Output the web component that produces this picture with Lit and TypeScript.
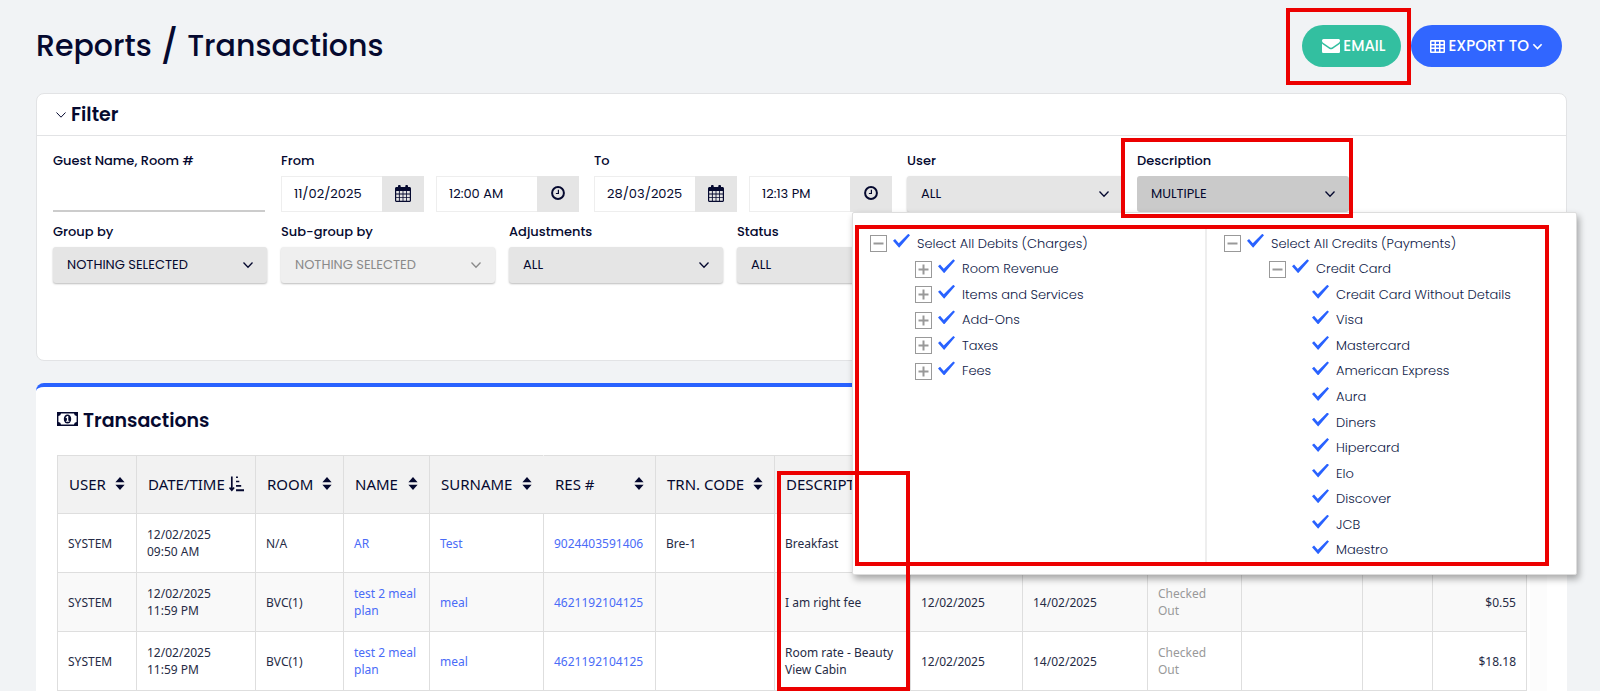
import { LitElement, html, css, svg, nothing } from "lit";
import { customElement } from "lit/decorators.js";
import { classMap } from "lit/directives/class-map.js";

interface TreeNode {
  id: string;
  label: string;
  level: number;
  toggle?: "plus" | "minus";
}

const DEBITS: TreeNode[] = [
  { id: "debits", label: "Select All Debits (Charges)", level: 0, toggle: "minus" },
  { id: "room-revenue", label: "Room Revenue", level: 1, toggle: "plus" },
  { id: "items", label: "Items and Services", level: 1, toggle: "plus" },
  { id: "addons", label: "Add-Ons", level: 1, toggle: "plus" },
  { id: "taxes", label: "Taxes", level: 1, toggle: "plus" },
  { id: "fees", label: "Fees", level: 1, toggle: "plus" },
];

const CARDS = [
  "Credit Card Without Details", "Visa", "Mastercard", "American Express", "Aura",
  "Diners", "Hipercard", "Elo", "Discover", "JCB", "Maestro",
];

const CREDITS: TreeNode[] = [
  { id: "credits", label: "Select All Credits (Payments)", level: 0, toggle: "minus" },
  { id: "credit-card", label: "Credit Card", level: 1, toggle: "minus" },
  ...CARDS.map((label, i) => ({ id: `card-${i}`, label, level: 2 })),
];

const HEADERS = ["User", "Date/Time", "Room", "Name", "Surname", "Res #", "Trn. Code", "Description", "", "", "", "", "", ""];
const WIDTHS = ["w79", "w119", "w88", "w86", "w114", "w112", "w119", "w136", "w112", "w125", "w94", "w121", "w70", "rest"];

const ROWS: string[][] = [
  ["SYSTEM", "12/02/2025 09:50 AM", "N/A", "AR", "Test", "9024403591406", "Bre-1", "Breakfast", "", "", "", "", "", ""],
  ["SYSTEM", "12/02/2025 11:59 PM", "BVC(1)", "test 2 meal plan", "meal", "4621192104125", "", "I am right fee", "12/02/2025", "14/02/2025", "Checked Out", "", "", "$0.55"],
  ["SYSTEM", "12/02/2025 11:59 PM", "BVC(1)", "test 2 meal plan", "meal", "4621192104125", "", "Room rate - Beauty View Cabin", "12/02/2025", "14/02/2025", "Checked Out", "", "", "$18.18"],
];

const chevron = (size: number, width: number) => html`<svg width=${size} height=${size} viewBox="0 0 12 12" fill="none" stroke="currentColor" stroke-width=${width} aria-hidden="true"><path d="M1.5 3.5 6 8.2l4.5-4.7"/></svg>`;

const calendarIcon = html`<svg width="16" height="17" viewBox="0 0 16 17" aria-hidden="true">
  <path fill="currentColor" fill-rule="evenodd" d="M1.5 2H3V1.2C3 .5 3.5 0 4.1 0h.5c.6 0 1.1.5 1.1 1.2V2h4.600V1.200C10.300.5 10.800 0 11.400 0h.5C12.500 0 13 .5 13 1.200V2h1.500C15.300 2 16 2.700 16 3.500v12c0 .8-.7 1.500-1.500 1.500h-13C.7 17 0 16.300 0 15.500v-12C0 2.700.7 2 1.500 2ZM1.200 6v2.500h2.700V6Zm3.600 0v2.500h2.800V6Zm3.600 0v2.500h2.800V6ZM12 6v2.500h2.800V6ZM1.200 9.400v2.500h2.700V9.400Zm3.600 0v2.500h2.800V9.400Zm3.600 0v2.500h2.800V9.400Zm3.600 0v2.500h2.800V9.400ZM1.200 12.800v3h2.700v-3Zm3.600 0v3h2.800v-3Zm3.600 0v3h2.800v-3Zm3.600 0v3h2.800v-3Z"/>
</svg>`;

const clockIcon = html`<svg width="14" height="14" viewBox="0 0 14 14" fill="none" stroke="currentColor" aria-hidden="true">
  <circle cx="7" cy="7" r="5.900" stroke-width="2"/><path stroke-width="1.200" d="M7.400 3.800v3.700H4.900"/>
</svg>`;

const mailIcon = html`<svg width="18" height="14" viewBox="0 0 18 14" aria-hidden="true">
  <path fill="currentColor" d="M1.600 0h14.800C17.300 0 18 .7 18 1.600c0 1-.7 1.900-1.500 2.500L10.700 8c-.5.400-1.100.8-1.700.8S7.800 8.400 7.300 8L1.500 4.100C.8 3.600 0 2.600 0 1.700 0 .8.7 0 1.600 0Z"/>
  <path fill="currentColor" d="M18 4.500v7.900c0 .9-.7 1.600-1.600 1.600H1.600C.7 14 0 13.300 0 12.400V4.500c.3.400.6.700 1 .9l5.500 3.800c.7.500 1.600 1.100 2.500 1.100s1.800-.6 2.500-1.100L17 5.400c.4-.2.700-.5 1-.9Z"/>
</svg>`;

const tableIcon = html`<svg width="15" height="13" viewBox="0 0 15 13" aria-hidden="true">
  <path fill="currentColor" fill-rule="evenodd" d="M1.300 0h12.400C14.400 0 15 .6 15 1.300v10.400c0 .7-.6 1.300-1.300 1.300H1.300C.6 13 0 12.400 0 11.700V1.300C0 .6.6 0 1.300 0ZM1.500 1.700v2.200h3V1.700Zm4.500 0v2.200h3V1.700Zm4.500 0v2.200h3V1.700ZM1.500 5.400v2.200h3V5.400Zm4.500 0v2.200h3V5.400Zm4.500 0v2.200h3V5.400ZM1.500 9.100v2.400h3V9.100Zm4.500 0v2.400h3V9.100Zm4.500 0v2.400h3V9.100Z"/>
</svg>`;

const moneyIcon = html`<svg width="21" height="14" viewBox="0 0 21 14" aria-hidden="true">
  <path fill="currentColor" fill-rule="evenodd" d="M0 0h21v14H0ZM4 1.400A2.800 2.800 0 0 1 1.400 4v6A2.800 2.800 0 0 1 4 12.600h13A2.800 2.800 0 0 1 19.600 10V4A2.800 2.800 0 0 1 17 1.400Z"/>
  <ellipse cx="10.500" cy="7" rx="3.700" ry="4.600" fill="currentColor"/>
  <path fill="#fff" d="M10 4h1.300v4.700h1v1H8.900v-1h1V5.700l-.9.500-.4-.8Z"/>
</svg>`;

const sortIcon = html`<svg width="10" height="13" viewBox="0 0 10 13" aria-hidden="true">
  <path fill="currentColor" d="M5 0 9.600 5.200H.4Zm0 13L.4 7.800h9.200Z"/>
</svg>`;

const sortDateIcon = html`<svg width="15" height="16" viewBox="0 0 16 16" aria-hidden="true">
  <path fill="none" stroke="currentColor" stroke-width="1.800" d="M3 0v14M.5 11.800 3 14.600l2.500-2.800"/>
  <path fill="currentColor" d="M7.500 0h2v1.700h-2Zm0 4.500H11v1.700H7.500Zm0 4.600h5.500v1.700H7.500Zm0 4.600H16v2H7.500Z"/>
</svg>`;

@customElement("app-root")
export class AppRoot extends LitElement {
  static styles = css`
    :host {
      --ink: #05092f;
      --line: #e2e3e5;
      --grey: #e5e5e5;
      display: flex;
      flex-direction: column;
      box-sizing: border-box;
      min-height: 100vh;
      padding: 25px 33px 0 36px;
      background: #f1f3f5;
      color: var(--ink);
      font: 400 13px/18px Poppins, Inter, "Open Sans", sans-serif;
    }
    * { box-sizing: border-box; }
    button, input, select { font: inherit; color: inherit; margin: 0; border: 0; border-radius: 0; }
    svg { display: block; flex: none; }
    h1, h2 { margin: 0; font-weight: 500; }

    .top { display: flex; justify-content: space-between; align-items: flex-start; height: 68px; padding-right: 5px; }
    .title { display: flex; align-items: center; gap: 9px; font-size: 30px; line-height: 42px; }
    .slash { font-size: 34px; }
    .actions { display: flex; gap: 10px; }
    .pill {
      display: flex; align-items: center; justify-content: center; gap: 3px;
      height: 42px; padding: 0 19px; border-radius: 21px;
      color: #fff; font-size: 15px; font-weight: 500; line-height: 20px;
    }
    .email { position: relative; }
    .green { background: #33bfa0; padding: 0 16px 0 20px; }
    .blue { background: #3166ff; }

    .mark { position: absolute; border: 4px solid #ec0000; pointer-events: none; z-index: 10; }
    .mark-email { inset: -17px -10px -18px -16px; }
    .mark-field { inset: -14px -4px -6px -16px; }
    .mark-tree { inset: 12px 27px 8px 2px; }
    .mark-column { top: 15px; left: 2px; width: 133px; height: 220px; }

    .filter { height: 268px; border: 1px solid var(--line); border-radius: 8px; background: #fff; }
    .filter-head { display: flex; align-items: center; gap: 4px; height: 42px; padding-left: 18px; border-bottom: 1px solid var(--line); }
    h2 { font-size: 19px; font-weight: 600; line-height: 26px; }
    .fields { display: flex; flex-wrap: wrap; gap: 10px 14px; padding: 16px 16px 0; }
    .field { width: 214px; }
    .field.range { width: 299px; }
    .field.user { width: 216px; }
    .field.desc { width: 212px; position: relative; }
    .caption { display: block; font-weight: 500; line-height: 18px; margin-bottom: 6px; }
    .row2 { padding-top: 11px; }
    .guest { display: block; width: 212px; height: 36px; background: #fff; border-bottom: 2px solid #ccc; }
    .inputs { display: flex; gap: 12px; }
    .group { display: flex; width: 143px; height: 36px; }
    .group input { width: 101px; padding: 0 12px; border: 1px solid #eee; border-right: 0; background: #fff; }
    .addon { display: flex; align-items: center; justify-content: center; width: 42px; padding: 0 0 2px; background: var(--grey); }

    .select-box { position: relative; display: block; }
    .select {
      appearance: none; display: block; width: 100%; height: 36px; padding: 0 14px;
      border-radius: 3px; background: var(--grey); box-shadow: 0 1px 2px #0004;
      text-transform: uppercase; text-align: left; opacity: 1;
    }
    .select-box svg { position: absolute; right: 13px; top: 12px; pointer-events: none; }
    .select:disabled { background: #efefef; color: #8a8a8a; }
    .muted { color: #8a8a8a; }
    .select.open { background: #cacaca; box-shadow: none; }

    .popup {
      position: absolute; z-index: 5; top: 60px; right: -228px; width: 725px;
      display: grid; grid-template-columns: 352px 1fr; padding: 15px 0 11px;
      background: #fff; border: 1px solid #ddd; border-radius: 2px; box-shadow: 2px 4px 7px #0005;
    }
    .tree {
      display: grid; grid-template-rows: repeat(13, 1fr); height: 335px; margin: 0; padding: 3px 0 0 17px;
      list-style: none; color: #0f1a48; font-weight: 300;
    }
    .tree + .tree { border-left: 2px solid #eee; }
    .node { display: flex; align-items: center; }
    .level1 { padding-left: 45px; }
    .level2 { padding-left: 88px; }
    .toggle { width: 17px; height: 17px; padding: 0; margin-right: 6px; border: 1px solid #999; background: #fff; color: #999; }
    .check {
      appearance: none; width: 17px; height: 14px; margin: 0 7px 6px 0; background: #2962ff;
      clip-path: polygon(0 50%, 12% 38%, 34% 68%, 90% 0, 100% 10%, 36% 100%);
    }

    .report {
      flex: 1; margin-top: 22px; padding: 21px 20px 0 21px;
      border-top: 4px solid #2962ff; border-radius: 8px 8px 0 0; background: #fff;
    }
    .report-head { display: flex; align-items: center; gap: 5px; margin-bottom: 21px; }
    .report-head svg { margin-bottom: 4px; }
    .scroller { padding-right: 20px; background: linear-gradient(to left, #fcfcfc 17px, #fff 17px); }
    .data { width: 100%; table-layout: fixed; border-collapse: collapse; font: 12px/17px "Segoe UI", "Noto Sans", "Open Sans", sans-serif; }
    .data th { height: 58px; padding: 0 0 2px 11px; border: 1px solid #dedede; background: #f2f2f2; text-align: left; font-size: 15px; font-weight: 400; line-height: 20px; text-transform: uppercase; }
    .data th.open-right { border-right-color: #f2f2f2; }
    .data th.marked { position: relative; }
    .data td { height: 59px; padding: 0 10px; border: 1px solid #dedede; color: #262b45; }
    .data tr:nth-child(even) td { background: #f9f9f9; }
    .data td.amount { text-align: right; }
    .data td.status { color: #999; padding-right: 30px; }
    .data td.when { padding-right: 30px; }
    .data a { color: #4a6cf7; text-decoration: none; }
    .head { display: flex; align-items: center; justify-content: space-between; gap: 3px; padding-right: 11px; white-space: nowrap; }
    .w70 { width: 70px; } .w79 { width: 79px; } .w86 { width: 86px; } .w88 { width: 88px; } .w94 { width: 94px; }
    .w112 { width: 112px; } .w114 { width: 114px; } .w119 { width: 119px; } .w121 { width: 121px; }
    .w125 { width: 125px; } .w136 { width: 136px; }
  `;

  private group(id: string, label: string, value: string, kind: "date" | "time") {
    return html`<div class="group">
      <input id=${id} type="text" aria-label=${label} .value=${value} />
      <button class="addon" type="button" aria-label="Pick ${kind}">${kind === "date" ? calendarIcon : clockIcon}</button>
    </div>`;
  }

  private range(id: string, label: string, date: string, time: string) {
    return html`<div class="field range">
      <label class="caption" for=${id}>${label}</label>
      <div class="inputs">
        ${this.group(id, `${label} date`, date, "date")}
        ${this.group(`${id}-time`, `${label} time`, time, "time")}
      </div>
    </div>`;
  }

  private select(id: string, label: string, value: string, opts: { disabled?: boolean; extra?: string } = {}) {
    return html`<div class="field ${opts.extra ?? ""}">
      <label class="caption" for=${id}>${label}</label>
      <span class="select-box ${opts.disabled ? "muted" : ""}">
        <select class="select" id=${id} ?disabled=${opts.disabled}><option>${value}</option></select>
        ${chevron(12, 1.3)}
      </span>
    </div>`;
  }

  private node(n: TreeNode) {
    return html`<li class="node level${n.level}">
      ${n.toggle
        ? html`<button class="toggle" type="button" aria-label="Toggle ${n.label}">
            <svg width="15" height="15" viewBox="0 0 15 15" stroke="currentColor" stroke-width="2">
              <path d="M2.500 7.500h10"/>${n.toggle === "plus" ? svg`<path d="M7.500 2.500v10"/>` : nothing}
            </svg>
          </button>`
        : nothing}
      <input class="check" type="checkbox" id=${n.id} checked />
      <label for=${n.id}>${n.label}</label>
    </li>`;
  }

  private cell(text: string, col: number) {
    const cls = { amount: col === 13, status: col === 10, when: col === 1 };
    const link = col >= 3 && col <= 5;
    return html`<td class=${classMap(cls)}>${link ? html`<a href="#">${text}</a>` : text}</td>`;
  }

  render() {
    return html`
      <header class="top">
        <h1 class="title"><span>Reports</span><span class="slash">/</span><span>Transactions</span></h1>
        <div class="actions">
          <div class="email">
            <button class="pill green" type="button">${mailIcon}EMAIL</button>
            <div class="mark mark-email"></div>
          </div>
          <button class="pill blue" type="button">${tableIcon}EXPORT TO${chevron(11, 1.8)}</button>
        </div>
      </header>

      <section class="filter">
        <div class="filter-head">${chevron(12, 1)}<h2>Filter</h2></div>
        <div class="fields row1">
          <div class="field">
            <label class="caption" for="guest">Guest Name, Room #</label>
            <input class="guest" id="guest" type="text" />
          </div>
          ${this.range("from", "From", "11/02/2025", "12:00 AM")}
          ${this.range("to", "To", "28/03/2025", "12:13 PM")}
          ${this.select("user", "User", "ALL", { extra: "user" })}
          <div class="field desc">
            <label class="caption" for="desc">Description</label>
            <span class="select-box">
              <button class="select open" id="desc" type="button" aria-haspopup="true" aria-expanded="true">Multiple</button>
              ${chevron(12, 1.3)}
            </span>
            <div class="popup">
              <ul class="tree">${DEBITS.map((n) => this.node(n))}</ul>
              <ul class="tree">${CREDITS.map((n) => this.node(n))}</ul>
              <div class="mark mark-tree"></div>
            </div>
            <div class="mark mark-field"></div>
          </div>
        </div>
        <div class="fields row2">
          ${this.select("group", "Group by", "Nothing selected")}
          ${this.select("subgroup", "Sub-group by", "Nothing selected", { disabled: true })}
          ${this.select("adjust", "Adjustments", "All")}
          ${this.select("status", "Status", "All")}
        </div>
      </section>

      <section class="report">
        <div class="report-head">${moneyIcon}<h2>Transactions</h2></div>
        <div class="scroller">
          <table class="data">
            <colgroup>${WIDTHS.map((w) => html`<col class=${w} />`)}</colgroup>
            <thead>
              <tr>
                ${HEADERS.map((h, i) => html`<th class=${classMap({ "open-right": i === 4, marked: i === 7 })}>
                  ${h ? html`<div class="head"><span>${h}</span>${i === 1 ? sortDateIcon : i < 7 ? sortIcon : nothing}</div>` : nothing}
                  ${i === 7 ? html`<div class="mark mark-column"></div>` : nothing}
                </th>`)}
              </tr>
            </thead>
            <tbody>${ROWS.map((r) => html`<tr>${r.map((c, i) => this.cell(c, i))}</tr>`)}</tbody>
          </table>
        </div>
      </section>
    `;
  }
}
